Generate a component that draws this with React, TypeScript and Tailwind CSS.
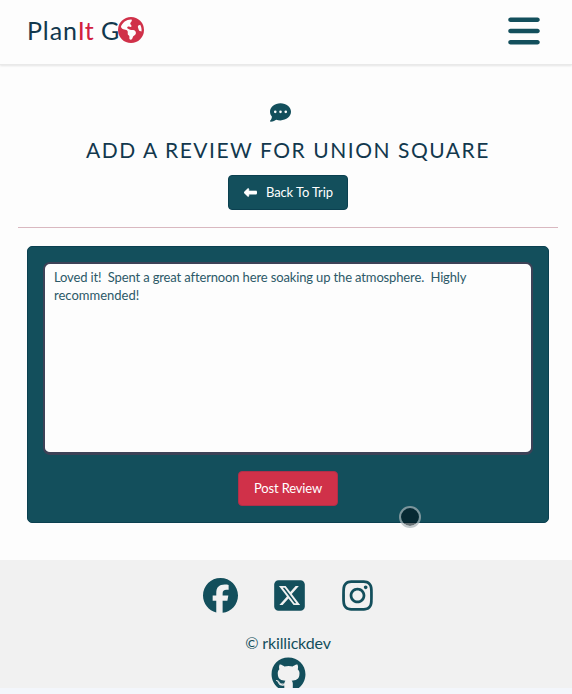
import {
  FaBars,
  FaCommentDots,
  FaEarthAmericas,
  FaFacebook,
  FaGithub,
  FaInstagram,
  FaLeftLong,
  FaSquareXTwitter,
} from 'react-icons/fa6';

function Header() {
  return (
    <header className="flex h-[65px] items-start justify-between border-b border-[#e9e9e9] bg-[#fdfdfd] pl-[27px] pr-[30px] shadow-[0_1px_2px_rgba(0,0,0,0.1)]">
      <a className="mt-[12px] flex h-9 items-center whitespace-pre text-[25px] leading-9 text-[#12384d]">
        <span className="tracking-[0.9px]">Plan</span>
        <span className="tracking-[0.3px] text-[#d2203f]">It</span>
        <span className="ml-[7px] tracking-[-0.5px]">G</span>
        <FaEarthAmericas className="-ml-px size-[26px] text-[#d03149]" />
      </a>
      <button aria-label="Menu" className="mt-[13px] text-[#134f5c]">
        <FaBars className="size-9" />
      </button>
    </header>
  );
}

function ReviewForm() {
  return (
    <form className="ml-[27px] mr-[23px] mt-[18px] flex h-[277px] flex-col items-center rounded-[5px] border border-[#0b4050] bg-[#134f5c] px-[15px] pt-[15px]">
      <div className="h-[193px] w-full rounded-[7px] border-2 border-b-[3px] border-[#3d4257] bg-[#fdfdfd] px-[9px] pt-[4px] text-[13px] leading-[18px] text-[#2c5968]">
        <p className="whitespace-pre tracking-[-0.14px]">Loved it!  Spent a great afternoon here soaking up the atmosphere.  Highly</p>
        <p>recommended!</p>
      </div>
      <button type="button" className="mt-[16px] h-[35px] w-[100px] rounded-[4px] border border-[#b02f49] bg-[#d03149] text-[13px] tracking-[-0.15px] text-white">
        Post Review
      </button>
    </form>
  );
}

function Footer() {
  return (
    <footer className="mt-[37px] flex h-[128px] flex-col items-center overflow-hidden bg-[#f1f1f1] pl-[4px] text-[#134f5c]">
      <div className="ml-px mt-[18px] flex h-9 items-center gap-[34px]">
        <FaFacebook className="size-[35px]" />
        <FaSquareXTwitter className="size-[35px]" />
        <FaInstagram className="-ml-px size-[35px]" />
      </div>
      <p className="mt-[18px] text-[16px] leading-6 tracking-[-0.15px]">© rkillickdev</p>
      <FaGithub className="mt-[2px] size-[35px] shrink-0" />
    </footer>
  );
}

export default function App() {
  return (
    <div className="relative h-[694px] overflow-hidden bg-[#fdfdfd] font-['Lato',sans-serif]">
      <Header />
      <main>
        <section className="ml-[18px] mr-[14px] flex h-[163px] flex-col items-center border-b border-b-[#d9b8c0]">
          <FaCommentDots className="mr-[15px] mt-[37px] size-[21px] text-[#134f5c]" />
          <h1 className="mt-[11px] whitespace-nowrap text-[21px] leading-8 tracking-[1.53px] text-[#12384d]">
            ADD A REVIEW FOR UNION SQUARE
          </h1>
          <button className="mt-[9px] flex h-[35px] w-[120px] items-center rounded-[4px] border border-[#0b4050] bg-[#134f5c] pl-[15px] text-[13px] text-white">
            <FaLeftLong className="mr-[9px] size-[13px] stroke-white stroke-[20px]" />
            <span className="whitespace-nowrap tracking-[-0.12px]">Back To Trip</span>
          </button>
        </section>
        <ReviewForm />
      </main>
      <Footer />
      <div className="h-[6px] bg-[#f3f6fb]" />
      <div className="absolute left-[399px] top-[506px] size-[22px] rounded-full border-2 border-[#a9b4b8]/70 bg-[#001018]/60 bg-clip-padding" />
    </div>
  );
}
